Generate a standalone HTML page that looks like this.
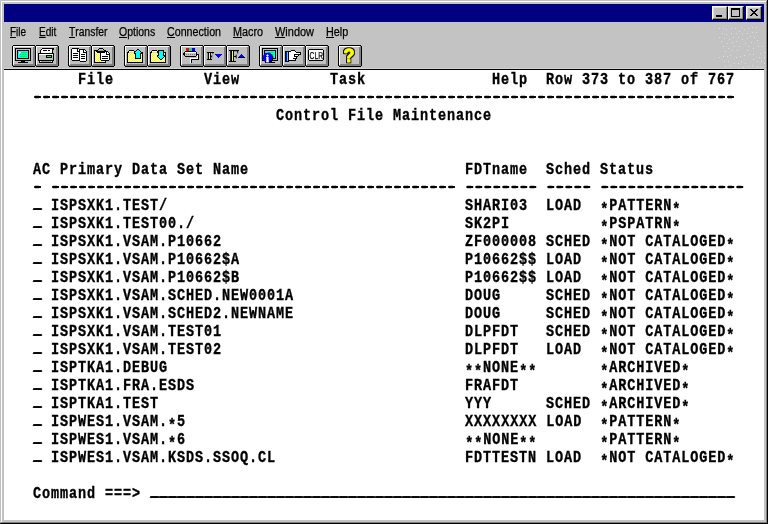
<!DOCTYPE html>
<html><head><meta charset="utf-8"><title>Control File Maintenance</title>
<style>
html,body{margin:0;padding:0;background:#c3c3c3;}
body{width:768px;height:524px;position:relative;overflow:hidden;font-family:"Liberation Sans",sans-serif;}
#win{position:absolute;left:0;top:0;width:768px;height:524px;background:#c3c3c3;box-sizing:border-box;}
.edge{position:absolute;}
#title{position:absolute;left:4px;top:4px;width:760px;height:18px;background:#000080;}
.tb{position:absolute;top:2px;width:16px;height:14px;background:#c0c0c0;box-sizing:border-box;border:1px solid;border-color:#fff #000 #000 #fff;box-shadow:inset -1px -1px 0 #808080, inset 1px 1px 0 #dfdfdf;}
.tb svg{position:absolute;left:-1px;top:-1px;}
#menu{will-change:transform;position:absolute;left:4px;top:22px;width:760px;height:20px;font-size:12px;color:#000;}
#menu span{-webkit-text-stroke:0.25px #000;position:absolute;top:3px;line-height:14px;white-space:nowrap;transform-origin:0 0;}
#menu u{text-decoration:none;border-bottom:1px solid #000;display:inline-block;line-height:10px;}
#tools{will-change:transform;position:absolute;left:4px;top:42px;width:760px;height:27px;}
.btn{position:absolute;top:3px;width:24px;height:22px;}
#term{position:absolute;left:4px;top:69px;width:760px;height:451px;background:#fff;border-top:1px solid #000;box-sizing:border-box;}
#tx{position:absolute;left:0;top:0;width:760px;height:450px;will-change:transform;}
#term .r{position:absolute;left:20px;height:18px;margin:0;font-family:"Liberation Mono",monospace;font-weight:bold;font-size:13.5px;letter-spacing:0.9px;line-height:18px;color:#000;-webkit-text-stroke:0.3px #000;white-space:pre;transform-origin:0 0;transform:translateY(-1px) scaleY(1.235);}
#term .r i{font-style:normal;display:inline-block;transform:translateY(-1.5px);text-shadow:0 -0.81px 0 #000,0.9px 0 0 #000,0.9px -0.81px 0 #000;}
#term .r em{font-style:normal;position:relative;top:2.5px;}
#term .r b{position:relative;top:-0.84px;text-shadow:-1px 0 0 #000,1px 0 0 #000,2px 0 0 #000;}
</style></head><body>
<div id="win">
<div class="edge" style="left:0;top:0;width:768px;height:1px;background:#c0c0c0"></div>
<div class="edge" style="left:0;top:0;width:1px;height:524px;background:#c0c0c0"></div>
<div class="edge" style="left:1px;top:1px;width:766px;height:1px;background:#fff"></div>
<div class="edge" style="left:1px;top:1px;width:1px;height:522px;background:#fff"></div>
<div class="edge" style="left:766px;top:1px;width:1px;height:522px;background:#808080"></div>
<div class="edge" style="left:1px;top:522px;width:766px;height:1px;background:#808080"></div>
<div class="edge" style="left:767px;top:0;width:1px;height:524px;background:#000"></div>
<div class="edge" style="left:0;top:523px;width:768px;height:1px;background:#000"></div>
<div class="edge" style="left:4px;top:68px;width:760px;height:1px;background:#d2d2d2"></div>
<svg width="56" height="48" shape-rendering="crispEdges" style="position:absolute;left:712px;top:22px" fill="#dedede"><rect x="7" y="6" width="1" height="1"/><rect x="11" y="6" width="1" height="1"/><rect x="14" y="7" width="1" height="1"/><rect x="19" y="6" width="1" height="1"/><rect x="23" y="6" width="1" height="1"/><rect x="29" y="5" width="1" height="1"/><rect x="32" y="7" width="1" height="1"/><rect x="36" y="6" width="1" height="1"/><rect x="40" y="5" width="1" height="1"/><rect x="44" y="5" width="1" height="1"/><rect x="10" y="11" width="1" height="1"/><rect x="14" y="12" width="1" height="1"/><rect x="19" y="11" width="1" height="1"/><rect x="24" y="11" width="1" height="1"/><rect x="27" y="9" width="1" height="1"/><rect x="30" y="12" width="1" height="1"/><rect x="35" y="11" width="1" height="1"/><rect x="40" y="10" width="1" height="1"/><rect x="44" y="10" width="1" height="1"/><rect x="7" y="15" width="1" height="1"/><rect x="12" y="16" width="1" height="1"/><rect x="17" y="17" width="1" height="1"/><rect x="21" y="15" width="1" height="1"/><rect x="26" y="15" width="1" height="1"/><rect x="30" y="17" width="1" height="1"/><rect x="35" y="16" width="1" height="1"/><rect x="38" y="14" width="1" height="1"/><rect x="42" y="15" width="1" height="1"/><rect x="45" y="18" width="1" height="1"/><rect x="9" y="19" width="1" height="1"/><rect x="15" y="21" width="1" height="1"/><rect x="20" y="20" width="1" height="1"/><rect x="24" y="19" width="1" height="1"/><rect x="33" y="21" width="1" height="1"/><rect x="39" y="20" width="1" height="1"/><rect x="11" y="24" width="1" height="1"/><rect x="16" y="26" width="1" height="1"/><rect x="22" y="24" width="1" height="1"/><rect x="27" y="24" width="1" height="1"/><rect x="36" y="24" width="1" height="1"/><rect x="41" y="26" width="1" height="1"/><rect x="46" y="24" width="1" height="1"/><rect x="50" y="24" width="1" height="1"/><rect x="13" y="29" width="1" height="1"/><rect x="20" y="28" width="1" height="1"/><rect x="25" y="28" width="1" height="1"/><rect x="35" y="28" width="1" height="1"/><rect x="48" y="31" width="1" height="1"/><rect x="52" y="30" width="1" height="1"/><rect x="7" y="35" width="1" height="1"/><rect x="11" y="34" width="1" height="1"/><rect x="15" y="34" width="1" height="1"/><rect x="18" y="33" width="1" height="1"/><rect x="24" y="35" width="1" height="1"/><rect x="28" y="34" width="1" height="1"/><rect x="32" y="33" width="1" height="1"/><rect x="37" y="32" width="1" height="1"/><rect x="41" y="32" width="1" height="1"/><rect x="47" y="35" width="1" height="1"/><rect x="52" y="35" width="1" height="1"/><rect x="12" y="39" width="1" height="1"/><rect x="16" y="39" width="1" height="1"/><rect x="22" y="41" width="1" height="1"/><rect x="26" y="41" width="1" height="1"/><rect x="29" y="39" width="1" height="1"/><rect x="33" y="41" width="1" height="1"/><rect x="41" y="37" width="1" height="1"/><rect x="45" y="39" width="1" height="1"/><rect x="49" y="39" width="1" height="1"/><rect x="52" y="41" width="1" height="1"/><rect x="13" y="44" width="1" height="1"/><rect x="18" y="43" width="1" height="1"/><rect x="36" y="44" width="1" height="1"/><rect x="40" y="43" width="1" height="1"/><rect x="45" y="44" width="1" height="1"/><rect x="31" y="45" width="1" height="1"/><rect x="49" y="45" width="1" height="1"/></svg>
<div id="title">
<div class="tb" style="left:708px"><svg width="16" height="14" shape-rendering="crispEdges"><rect x="4" y="9" width="6" height="2" fill="#000"/></svg></div>
<div class="tb" style="left:724px"><svg width="16" height="14" shape-rendering="crispEdges"><rect x="3.5" y="3.5" width="8" height="7" fill="none" stroke="#000"/><rect x="3" y="2" width="9" height="2" fill="#000"/></svg></div>
<div class="tb" style="left:742px"><svg width="16" height="14" shape-rendering="crispEdges"><path d="M4 3h2v1h1v1h2v-1h1v-1h2v1h-1v1h-1v1h-1v1h1v1h1v1h1v1h-2v-1h-1v-1h-2v1h-1v1h-2v-1h1v-1h1v-1h1v-1h-1v-1h-1v-1h-1z" fill="#000"/></svg></div>
</div>
<div id="menu">
<span style="left:6px;transform:scaleX(0.83)"><u>F</u>ile</span>
<span style="left:34.5px;transform:scaleX(0.84)"><u>E</u>dit</span>
<span style="left:64.5px;transform:scaleX(0.86)"><u>T</u>ransfer</span>
<span style="left:115px;transform:scaleX(0.875)"><u>O</u>ptions</span>
<span style="left:163px;transform:scaleX(0.89)"><u>C</u>onnection</span>
<span style="left:229px;transform:scaleX(0.9)"><u>M</u>acro</span>
<span style="left:271px;transform:scaleX(0.915)"><u>W</u>indow</span>
<span style="left:322px;transform:scaleX(0.9)"><u>H</u>elp</span>
</div>
<div id="tools">
<svg id="tsvg" width="760" height="27" viewBox="4 42 760 27" shape-rendering="crispEdges" style="position:absolute;left:0;top:0">
<defs><pattern id="dy" x="0" y="0" width="2" height="2" patternUnits="userSpaceOnUse"><rect width="2" height="2" fill="#fff"/><rect x="0" y="0" width="1" height="1" fill="#ff0"/><rect x="1" y="1" width="1" height="1" fill="#ff0"/></pattern><filter id="ol" x="-30%" y="-30%" width="160%" height="160%"><feMorphology in="SourceAlpha" operator="dilate" radius="1" result="d"/><feFlood flood-color="#000"/><feComposite in2="d" operator="in" result="o"/><feMerge><feMergeNode in="o"/><feMergeNode in="SourceGraphic"/></feMerge></filter></defs>
<rect x="13" y="46" width="22" height="20" fill="#c0c0c0"/>
<rect x="13" y="45" width="22" height="1" fill="#000"/>
<rect x="13" y="66" width="22" height="1" fill="#000"/>
<rect x="12" y="46" width="1" height="20" fill="#000"/>
<rect x="35" y="46" width="1" height="20" fill="#000"/>
<rect x="13" y="46" width="21" height="1" fill="#fff"/>
<rect x="13" y="46" width="1" height="19" fill="#fff"/>
<rect x="14" y="64" width="21" height="1" fill="#808080"/>
<rect x="13" y="65" width="22" height="1" fill="#808080"/>
<rect x="33" y="47" width="1" height="19" fill="#808080"/>
<rect x="34" y="46" width="1" height="20" fill="#808080"/>
<rect x="36" y="46" width="22" height="20" fill="#c0c0c0"/>
<rect x="36" y="45" width="22" height="1" fill="#000"/>
<rect x="36" y="66" width="22" height="1" fill="#000"/>
<rect x="35" y="46" width="1" height="20" fill="#000"/>
<rect x="58" y="46" width="1" height="20" fill="#000"/>
<rect x="36" y="46" width="21" height="1" fill="#fff"/>
<rect x="36" y="46" width="1" height="19" fill="#fff"/>
<rect x="37" y="64" width="21" height="1" fill="#808080"/>
<rect x="36" y="65" width="22" height="1" fill="#808080"/>
<rect x="56" y="47" width="1" height="19" fill="#808080"/>
<rect x="57" y="46" width="1" height="20" fill="#808080"/>
<rect x="69" y="46" width="22" height="20" fill="#c0c0c0"/>
<rect x="69" y="45" width="22" height="1" fill="#000"/>
<rect x="69" y="66" width="22" height="1" fill="#000"/>
<rect x="68" y="46" width="1" height="20" fill="#000"/>
<rect x="91" y="46" width="1" height="20" fill="#000"/>
<rect x="69" y="46" width="21" height="1" fill="#fff"/>
<rect x="69" y="46" width="1" height="19" fill="#fff"/>
<rect x="70" y="64" width="21" height="1" fill="#808080"/>
<rect x="69" y="65" width="22" height="1" fill="#808080"/>
<rect x="89" y="47" width="1" height="19" fill="#808080"/>
<rect x="90" y="46" width="1" height="20" fill="#808080"/>
<rect x="92" y="46" width="22" height="20" fill="#c0c0c0"/>
<rect x="92" y="45" width="22" height="1" fill="#000"/>
<rect x="92" y="66" width="22" height="1" fill="#000"/>
<rect x="91" y="46" width="1" height="20" fill="#000"/>
<rect x="114" y="46" width="1" height="20" fill="#000"/>
<rect x="92" y="46" width="21" height="1" fill="#fff"/>
<rect x="92" y="46" width="1" height="19" fill="#fff"/>
<rect x="93" y="64" width="21" height="1" fill="#808080"/>
<rect x="92" y="65" width="22" height="1" fill="#808080"/>
<rect x="112" y="47" width="1" height="19" fill="#808080"/>
<rect x="113" y="46" width="1" height="20" fill="#808080"/>
<rect x="125" y="46" width="22" height="20" fill="#c0c0c0"/>
<rect x="125" y="45" width="22" height="1" fill="#000"/>
<rect x="125" y="66" width="22" height="1" fill="#000"/>
<rect x="124" y="46" width="1" height="20" fill="#000"/>
<rect x="147" y="46" width="1" height="20" fill="#000"/>
<rect x="125" y="46" width="21" height="1" fill="#fff"/>
<rect x="125" y="46" width="1" height="19" fill="#fff"/>
<rect x="126" y="64" width="21" height="1" fill="#808080"/>
<rect x="125" y="65" width="22" height="1" fill="#808080"/>
<rect x="145" y="47" width="1" height="19" fill="#808080"/>
<rect x="146" y="46" width="1" height="20" fill="#808080"/>
<rect x="148" y="46" width="22" height="20" fill="#c0c0c0"/>
<rect x="148" y="45" width="22" height="1" fill="#000"/>
<rect x="148" y="66" width="22" height="1" fill="#000"/>
<rect x="147" y="46" width="1" height="20" fill="#000"/>
<rect x="170" y="46" width="1" height="20" fill="#000"/>
<rect x="148" y="46" width="21" height="1" fill="#fff"/>
<rect x="148" y="46" width="1" height="19" fill="#fff"/>
<rect x="149" y="64" width="21" height="1" fill="#808080"/>
<rect x="148" y="65" width="22" height="1" fill="#808080"/>
<rect x="168" y="47" width="1" height="19" fill="#808080"/>
<rect x="169" y="46" width="1" height="20" fill="#808080"/>
<rect x="181" y="46" width="22" height="20" fill="#c0c0c0"/>
<rect x="181" y="45" width="22" height="1" fill="#000"/>
<rect x="181" y="66" width="22" height="1" fill="#000"/>
<rect x="180" y="46" width="1" height="20" fill="#000"/>
<rect x="203" y="46" width="1" height="20" fill="#000"/>
<rect x="181" y="46" width="21" height="1" fill="#fff"/>
<rect x="181" y="46" width="1" height="19" fill="#fff"/>
<rect x="182" y="64" width="21" height="1" fill="#808080"/>
<rect x="181" y="65" width="22" height="1" fill="#808080"/>
<rect x="201" y="47" width="1" height="19" fill="#808080"/>
<rect x="202" y="46" width="1" height="20" fill="#808080"/>
<rect x="204" y="46" width="22" height="20" fill="#c0c0c0"/>
<rect x="204" y="45" width="22" height="1" fill="#000"/>
<rect x="204" y="66" width="22" height="1" fill="#000"/>
<rect x="203" y="46" width="1" height="20" fill="#000"/>
<rect x="226" y="46" width="1" height="20" fill="#000"/>
<rect x="204" y="46" width="21" height="1" fill="#fff"/>
<rect x="204" y="46" width="1" height="19" fill="#fff"/>
<rect x="205" y="64" width="21" height="1" fill="#808080"/>
<rect x="204" y="65" width="22" height="1" fill="#808080"/>
<rect x="224" y="47" width="1" height="19" fill="#808080"/>
<rect x="225" y="46" width="1" height="20" fill="#808080"/>
<rect x="227" y="46" width="22" height="20" fill="#c0c0c0"/>
<rect x="227" y="45" width="22" height="1" fill="#000"/>
<rect x="227" y="66" width="22" height="1" fill="#000"/>
<rect x="226" y="46" width="1" height="20" fill="#000"/>
<rect x="249" y="46" width="1" height="20" fill="#000"/>
<rect x="227" y="46" width="21" height="1" fill="#fff"/>
<rect x="227" y="46" width="1" height="19" fill="#fff"/>
<rect x="228" y="64" width="21" height="1" fill="#808080"/>
<rect x="227" y="65" width="22" height="1" fill="#808080"/>
<rect x="247" y="47" width="1" height="19" fill="#808080"/>
<rect x="248" y="46" width="1" height="20" fill="#808080"/>
<rect x="260" y="46" width="22" height="20" fill="#c0c0c0"/>
<rect x="260" y="45" width="22" height="1" fill="#000"/>
<rect x="260" y="66" width="22" height="1" fill="#000"/>
<rect x="259" y="46" width="1" height="20" fill="#000"/>
<rect x="282" y="46" width="1" height="20" fill="#000"/>
<rect x="260" y="46" width="21" height="1" fill="#fff"/>
<rect x="260" y="46" width="1" height="19" fill="#fff"/>
<rect x="261" y="64" width="21" height="1" fill="#808080"/>
<rect x="260" y="65" width="22" height="1" fill="#808080"/>
<rect x="280" y="47" width="1" height="19" fill="#808080"/>
<rect x="281" y="46" width="1" height="20" fill="#808080"/>
<rect x="283" y="46" width="22" height="20" fill="#c0c0c0"/>
<rect x="283" y="45" width="22" height="1" fill="#000"/>
<rect x="283" y="66" width="22" height="1" fill="#000"/>
<rect x="282" y="46" width="1" height="20" fill="#000"/>
<rect x="305" y="46" width="1" height="20" fill="#000"/>
<rect x="283" y="46" width="21" height="1" fill="#fff"/>
<rect x="283" y="46" width="1" height="19" fill="#fff"/>
<rect x="284" y="64" width="21" height="1" fill="#808080"/>
<rect x="283" y="65" width="22" height="1" fill="#808080"/>
<rect x="303" y="47" width="1" height="19" fill="#808080"/>
<rect x="304" y="46" width="1" height="20" fill="#808080"/>
<rect x="306" y="46" width="22" height="20" fill="#c0c0c0"/>
<rect x="306" y="45" width="22" height="1" fill="#000"/>
<rect x="306" y="66" width="22" height="1" fill="#000"/>
<rect x="305" y="46" width="1" height="20" fill="#000"/>
<rect x="328" y="46" width="1" height="20" fill="#000"/>
<rect x="306" y="46" width="21" height="1" fill="#fff"/>
<rect x="306" y="46" width="1" height="19" fill="#fff"/>
<rect x="307" y="64" width="21" height="1" fill="#808080"/>
<rect x="306" y="65" width="22" height="1" fill="#808080"/>
<rect x="326" y="47" width="1" height="19" fill="#808080"/>
<rect x="327" y="46" width="1" height="20" fill="#808080"/>
<rect x="339" y="46" width="22" height="20" fill="#c0c0c0"/>
<rect x="339" y="45" width="22" height="1" fill="#000"/>
<rect x="339" y="66" width="22" height="1" fill="#000"/>
<rect x="338" y="46" width="1" height="20" fill="#000"/>
<rect x="361" y="46" width="1" height="20" fill="#000"/>
<rect x="339" y="46" width="21" height="1" fill="#fff"/>
<rect x="339" y="46" width="1" height="19" fill="#fff"/>
<rect x="340" y="64" width="21" height="1" fill="#808080"/>
<rect x="339" y="65" width="22" height="1" fill="#808080"/>
<rect x="359" y="47" width="1" height="19" fill="#808080"/>
<rect x="360" y="46" width="1" height="20" fill="#808080"/>
<rect x="15" y="48" width="16" height="13" fill="#000"/>
<rect x="16" y="49" width="14" height="11" fill="#c0c0c0"/>
<rect x="17" y="50" width="12" height="9" fill="#000"/>
<rect x="18" y="51" width="10" height="7" fill="#00ffff"/>
<rect x="20" y="52" width="7" height="1" fill="#00ff00"/>
<rect x="20" y="54" width="7" height="1" fill="#00ff00"/>
<rect x="20" y="56" width="7" height="1" fill="#00ff00"/>
<rect x="19" y="52" width="2" height="2" fill="#fff"/>
<rect x="21" y="52" width="6" height="1" fill="#00ff00"/>
<rect x="20" y="53" width="1" height="1" fill="#00ffff"/>
<rect x="21" y="61" width="4" height="1" fill="#000"/>
<rect x="18" y="62" width="10" height="1" fill="#000"/>
<rect x="38" y="53" width="16" height="8" fill="#000"/>
<rect x="39" y="54" width="14" height="6" fill="#c0c0c0"/>
<rect x="39" y="54" width="14" height="1" fill="#fff"/>
<rect x="46" y="55" width="6" height="3" fill="#000"/>
<rect x="47" y="56" width="4" height="1" fill="#00ff00"/>
<rect x="42" y="48" width="12" height="1" fill="#000"/>
<rect x="42" y="49" width="10" height="4" fill="#fff"/>
<rect x="41" y="50" width="1" height="3" fill="#fff"/>
<rect x="41" y="49" width="1" height="1" fill="#000"/>
<rect x="40" y="50" width="1" height="3" fill="#000"/>
<rect x="52" y="49" width="1" height="4" fill="#000"/>
<rect x="53" y="49" width="1" height="1" fill="#000"/>
<rect x="51" y="49" width="1" height="1" fill="#fff"/>
<rect x="43" y="50" width="4" height="1" fill="#000"/>
<rect x="48" y="50" width="2" height="1" fill="#000"/>
<rect x="39" y="61" width="14" height="2" fill="#000"/>
<rect x="40" y="61" width="12" height="1" fill="#fff"/>
<rect x="41" y="61" width="10" height="1" fill="#a0a0a0"/>
<rect x="72" y="49" width="8" height="11" fill="#fff"/>
<rect x="72" y="48" width="7" height="1" fill="#000"/>
<rect x="72" y="60" width="8" height="1" fill="#000"/>
<rect x="71" y="49" width="1" height="11" fill="#000"/>
<rect x="80" y="50" width="1" height="10" fill="#000"/>
<rect x="77" y="49" width="1" height="3" fill="#000"/>
<rect x="77" y="51" width="3" height="1" fill="#000"/>
<rect x="79" y="49" width="1" height="1" fill="#000"/>
<rect x="73" y="53" width="5" height="1" fill="#000"/>
<rect x="73" y="55" width="5" height="1" fill="#000"/>
<rect x="73" y="57" width="5" height="1" fill="#000"/>
<rect x="80" y="50" width="6" height="11" fill="#fff"/>
<rect x="80" y="49" width="5" height="1" fill="#000"/>
<rect x="80" y="61" width="6" height="1" fill="#000"/>
<rect x="79" y="50" width="1" height="11" fill="#000"/>
<rect x="86" y="51" width="1" height="10" fill="#000"/>
<rect x="83" y="50" width="1" height="3" fill="#000"/>
<rect x="83" y="52" width="3" height="1" fill="#000"/>
<rect x="85" y="50" width="1" height="1" fill="#000"/>
<rect x="81" y="54" width="4" height="1" fill="#000"/>
<rect x="81" y="56" width="4" height="1" fill="#000"/>
<rect x="81" y="58" width="4" height="1" fill="#000"/>
<rect x="94" y="50" width="12" height="13" fill="#000"/>
<rect x="95" y="51" width="10" height="11" fill="url(#dy)"/>
<rect x="101" y="52" width="8" height="8" fill="#fff"/>
<rect x="101" y="51" width="7" height="1" fill="#000"/>
<rect x="101" y="60" width="8" height="1" fill="#000"/>
<rect x="100" y="52" width="1" height="8" fill="#000"/>
<rect x="109" y="53" width="1" height="7" fill="#000"/>
<rect x="106" y="52" width="1" height="3" fill="#000"/>
<rect x="106" y="54" width="3" height="1" fill="#000"/>
<rect x="108" y="52" width="1" height="1" fill="#000"/>
<rect x="102" y="56" width="6" height="1" fill="#000"/>
<rect x="102" y="58" width="6" height="1" fill="#000"/>
<rect x="99" y="48" width="4" height="1" fill="#000"/>
<rect x="98" y="49" width="1" height="1" fill="#000"/>
<rect x="103" y="49" width="1" height="1" fill="#000"/>
<rect x="99" y="49" width="4" height="1" fill="#c0c0c0"/>
<rect x="96" y="50" width="10" height="2" fill="#000"/>
<rect x="98" y="50" width="6" height="1" fill="#a0a0a0"/>
<rect x="97" y="52" width="8" height="1" fill="#000"/>
<rect x="127" y="52" width="16" height="11" fill="#000"/>
<rect x="128" y="53" width="14" height="9" fill="url(#dy)"/>
<rect x="129" y="50" width="5" height="1" fill="#000"/>
<rect x="128" y="51" width="1" height="1" fill="#000"/>
<rect x="134" y="51" width="1" height="1" fill="#000"/>
<rect x="129" y="51" width="5" height="1" fill="#ffffc0"/>
<rect x="127" y="51" width="1" height="1" fill="#c0c0c0"/>
<rect x="128" y="52" width="7" height="1" fill="#000"/>
<rect x="129" y="52" width="5" height="1" fill="#e0e090"/>
<rect x="137" y="49" width="2" height="1" fill="#000"/>
<rect x="136" y="50" width="4" height="1" fill="#000"/>
<rect x="135" y="51" width="6" height="1" fill="#000"/>
<rect x="134" y="52" width="8" height="1" fill="#000"/>
<rect x="134" y="53" width="8" height="1" fill="#000"/>
<rect x="135" y="53" width="6" height="6" fill="#000"/>
<rect x="137" y="50" width="2" height="1" fill="#00ffff"/>
<rect x="136" y="51" width="4" height="1" fill="#00ffff"/>
<rect x="135" y="52" width="6" height="1" fill="#00ffff"/>
<rect x="136" y="53" width="4" height="5" fill="#00ffff"/>
<rect x="150" y="52" width="16" height="11" fill="#000"/>
<rect x="151" y="53" width="14" height="9" fill="url(#dy)"/>
<rect x="152" y="50" width="5" height="1" fill="#000"/>
<rect x="151" y="51" width="1" height="1" fill="#000"/>
<rect x="157" y="51" width="1" height="1" fill="#000"/>
<rect x="152" y="51" width="5" height="1" fill="#ffffc0"/>
<rect x="150" y="51" width="1" height="1" fill="#c0c0c0"/>
<rect x="151" y="52" width="7" height="1" fill="#000"/>
<rect x="152" y="52" width="5" height="1" fill="#e0e090"/>
<rect x="158" y="50" width="6" height="6" fill="#000"/>
<rect x="157" y="55" width="8" height="1" fill="#000"/>
<rect x="157" y="56" width="8" height="1" fill="#000"/>
<rect x="158" y="57" width="6" height="1" fill="#000"/>
<rect x="159" y="58" width="4" height="1" fill="#000"/>
<rect x="160" y="59" width="2" height="1" fill="#000"/>
<rect x="159" y="51" width="4" height="5" fill="#00ffff"/>
<rect x="158" y="56" width="6" height="1" fill="#00ffff"/>
<rect x="159" y="57" width="4" height="1" fill="#00ffff"/>
<rect x="160" y="58" width="2" height="1" fill="#00ffff"/>
<rect x="186" y="48" width="3" height="3" fill="#ff0000"/>
<rect x="189" y="48" width="3" height="3" fill="#00e090"/>
<rect x="192" y="48" width="3" height="3" fill="#0000ff"/>
<rect x="185" y="51" width="11" height="6" fill="#000"/>
<rect x="185" y="52" width="11" height="4" fill="#c0c0c0"/>
<rect x="185" y="52" width="11" height="1" fill="#fff"/>
<rect x="186" y="54" width="1" height="1" fill="#808080"/>
<rect x="188" y="54" width="1" height="1" fill="#808080"/>
<rect x="190" y="54" width="1" height="1" fill="#808080"/>
<rect x="192" y="54" width="1" height="1" fill="#808080"/>
<rect x="194" y="54" width="1" height="1" fill="#808080"/>
<rect x="184" y="52" width="1" height="4" fill="#000"/>
<rect x="183" y="53" width="1" height="2" fill="#000"/>
<rect x="196" y="52" width="1" height="4" fill="#000"/>
<rect x="197" y="54" width="2" height="1" fill="#000"/>
<rect x="198" y="54" width="1" height="6" fill="#000"/>
<rect x="191" y="59" width="8" height="1" fill="#000"/>
<rect x="191" y="59" width="1" height="4" fill="#000"/>
<rect x="190" y="58" width="8" height="1" fill="#fff"/>
<rect x="190" y="58" width="1" height="5" fill="#fff"/>
<rect x="197" y="55" width="1" height="4" fill="#fff"/>
<rect x="215" y="54" width="7" height="1" fill="#0000ff"/>
<rect x="216" y="55" width="5" height="1" fill="#0000ff"/>
<rect x="217" y="56" width="3" height="1" fill="#0000ff"/>
<rect x="218" y="57" width="1" height="1" fill="#0000ff"/>
<rect x="241" y="54" width="1" height="1" fill="#0000ff"/>
<rect x="240" y="55" width="3" height="1" fill="#0000ff"/>
<rect x="239" y="56" width="5" height="1" fill="#0000ff"/>
<rect x="238" y="57" width="7" height="1" fill="#000"/>
<rect x="238" y="57" width="1" height="1" fill="#0000ff"/>
<rect x="262" y="48" width="16" height="13" fill="#000"/>
<rect x="263" y="49" width="14" height="11" fill="#c0c0c0"/>
<rect x="264" y="50" width="12" height="9" fill="#000"/>
<rect x="265" y="51" width="10" height="7" fill="#00ffff"/>
<rect x="267" y="52" width="7" height="1" fill="#00ff00"/>
<rect x="267" y="54" width="7" height="1" fill="#00ff00"/>
<rect x="267" y="56" width="7" height="1" fill="#00ff00"/>
<rect x="266" y="52" width="2" height="2" fill="#fff"/>
<rect x="268" y="52" width="6" height="1" fill="#00ff00"/>
<rect x="267" y="53" width="1" height="1" fill="#00ffff"/>
<rect x="268" y="61" width="4" height="1" fill="#000"/>
<rect x="265" y="62" width="10" height="1" fill="#000"/>
<rect x="285" y="51" width="4" height="11" fill="#000"/>
<rect x="286" y="52" width="1" height="9" fill="#0000ff"/>
<rect x="287" y="52" width="1" height="9" fill="#00ffff"/>
<rect x="291" y="50" width="4" height="1" fill="#000"/>
<rect x="289" y="51" width="2" height="1" fill="#000"/>
<rect x="295" y="51" width="1" height="1" fill="#000"/>
<rect x="291" y="51" width="4" height="1" fill="#fff"/>
<rect x="289" y="52" width="7" height="1" fill="#fff"/>
<rect x="296" y="52" width="5" height="1" fill="#000"/>
<rect x="289" y="53" width="11" height="1" fill="#fff"/>
<rect x="300" y="53" width="1" height="1" fill="#000"/>
<rect x="289" y="54" width="5" height="1" fill="#fff"/>
<rect x="294" y="54" width="7" height="1" fill="#000"/>
<rect x="289" y="55" width="9" height="1" fill="#fff"/>
<rect x="298" y="55" width="1" height="1" fill="#000"/>
<rect x="294" y="55" width="1" height="1" fill="#000"/>
<rect x="289" y="56" width="5" height="1" fill="#fff"/>
<rect x="294" y="56" width="4" height="1" fill="#000"/>
<rect x="289" y="57" width="7" height="1" fill="#fff"/>
<rect x="296" y="57" width="1" height="1" fill="#000"/>
<rect x="289" y="58" width="4" height="1" fill="#fff"/>
<rect x="293" y="58" width="4" height="1" fill="#000"/>
<rect x="289" y="59" width="6" height="1" fill="#fff"/>
<rect x="295" y="59" width="1" height="1" fill="#000"/>
<rect x="289" y="60" width="7" height="1" fill="#000"/>
<rect x="308" y="49" width="16" height="12" fill="#000"/>
<rect x="309" y="50" width="14" height="10" fill="#fff"/>
<rect x="308" y="49" width="1" height="1" fill="#c0c0c0"/>
<rect x="323" y="49" width="1" height="1" fill="#c0c0c0"/>
<rect x="308" y="60" width="1" height="1" fill="#c0c0c0"/>
<rect x="323" y="60" width="1" height="1" fill="#c0c0c0"/>
<g shape-rendering="auto" text-rendering="geometricPrecision">
<text x="206.6" y="60" font-family="Liberation Serif,serif" font-weight="bold" font-size="12" fill="#000">F</text>
<g shape-rendering="crispEdges"><rect x="208" y="52" width="3" height="8" fill="#000"/><rect x="207" y="52" width="7" height="1" fill="#000"/><rect x="207" y="59" width="5" height="1" fill="#000"/><rect x="209" y="53" width="1" height="6" fill="#ffff40"/></g>
<text x="228.6" y="62" font-family="Liberation Serif,serif" font-weight="bold" font-size="18" fill="#000" textLength="10.5" lengthAdjust="spacingAndGlyphs">F</text>
<g shape-rendering="crispEdges"><rect x="231" y="50" width="3" height="12" fill="#000"/><rect x="229" y="50" width="10" height="1" fill="#000"/><rect x="229" y="61" width="7" height="1" fill="#000"/><rect x="232" y="51" width="1" height="10" fill="#ffff40"/></g>
<circle cx="268.3" cy="58" r="5" fill="#000"/>
<circle cx="267.7" cy="57.4" r="4.8" fill="#0000ff"/>
<text x="266" y="61.6" font-family="Liberation Serif,serif" font-weight="bold" font-size="10.5" fill="#fff" stroke="#fff" stroke-width="0.45">i</text>
<text x="309.6" y="59" font-family="Liberation Sans,sans-serif" font-size="10" fill="#000" stroke="#000" stroke-width="0.25" textLength="13.4" lengthAdjust="spacingAndGlyphs">CLR</text>
<text x="343.5" y="62" filter="url(#ol)" font-family="Liberation Sans,sans-serif" font-weight="bold" font-size="19" fill="#ffff00" stroke="#ffff00" stroke-width="0.7" stroke-linejoin="round" textLength="11" lengthAdjust="spacingAndGlyphs">?</text>
</g>
</svg>
</div>
<div id="term"><div id="tx"><div class="r" style="top:0px">      File          View          Task              Help  Row 373 to 387 of 767</div>
<div class="r" style="top:18px"> <b>------------------------------------------------------------------------------</b></div>
<div class="r" style="top:36px">                            Control File Maintenance</div>
<div class="r" style="top:90px"> AC Primary Data Set Name                        FDTname  Sched Status</div>
<div class="r" style="top:108px"> <b>-</b> <b>---------------------------------------------</b> <b>--------</b> <b>-----</b> <b>----------------</b></div>
<div class="r" style="top:126px"> <i>_</i> ISPSXK1.TEST/                                 SHARI03  LOAD  <em>*</em>PATTERN<em>*</em></div>
<div class="r" style="top:144px"> <i>_</i> ISPSXK1.TEST00./                              SK2PI          <em>*</em>PSPATRN<em>*</em></div>
<div class="r" style="top:162px"> <i>_</i> ISPSXK1.VSAM.P10662                           ZF000008 SCHED <em>*</em>NOT CATALOGED<em>*</em></div>
<div class="r" style="top:180px"> <i>_</i> ISPSXK1.VSAM.P10662$A                         P10662$$ LOAD  <em>*</em>NOT CATALOGED<em>*</em></div>
<div class="r" style="top:198px"> <i>_</i> ISPSXK1.VSAM.P10662$B                         P10662$$ LOAD  <em>*</em>NOT CATALOGED<em>*</em></div>
<div class="r" style="top:216px"> <i>_</i> ISPSXK1.VSAM.SCHED.NEW0001A                   DOUG     SCHED <em>*</em>NOT CATALOGED<em>*</em></div>
<div class="r" style="top:234px"> <i>_</i> ISPSXK1.VSAM.SCHED2.NEWNAME                   DOUG     SCHED <em>*</em>NOT CATALOGED<em>*</em></div>
<div class="r" style="top:252px"> <i>_</i> ISPSXK1.VSAM.TEST01                           DLPFDT   SCHED <em>*</em>NOT CATALOGED<em>*</em></div>
<div class="r" style="top:270px"> <i>_</i> ISPSXK1.VSAM.TEST02                           DLPFDT   LOAD  <em>*</em>NOT CATALOGED<em>*</em></div>
<div class="r" style="top:288px"> <i>_</i> ISPTKA1.DEBUG                                 <em>**</em>NONE<em>**</em>       <em>*</em>ARCHIVED<em>*</em></div>
<div class="r" style="top:306px"> <i>_</i> ISPTKA1.FRA.ESDS                              FRAFDT         <em>*</em>ARCHIVED<em>*</em></div>
<div class="r" style="top:324px"> <i>_</i> ISPTKA1.TEST                                  YYY      SCHED <em>*</em>ARCHIVED<em>*</em></div>
<div class="r" style="top:342px"> <i>_</i> ISPWES1.VSAM.<em>*</em>5                               XXXXXXXX LOAD  <em>*</em>PATTERN<em>*</em></div>
<div class="r" style="top:360px"> <i>_</i> ISPWES1.VSAM.<em>*</em>6                               <em>**</em>NONE<em>**</em>       <em>*</em>PATTERN<em>*</em></div>
<div class="r" style="top:378px"> <i>_</i> ISPWES1.VSAM.KSDS.SSOQ.CL                     FDTTESTN LOAD  <em>*</em>NOT CATALOGED<em>*</em></div>
<div class="r" style="top:414px"> Command ===&gt; <i>_________________________________________________________________</i></div>
</div></div>
</div>
</body></html>
